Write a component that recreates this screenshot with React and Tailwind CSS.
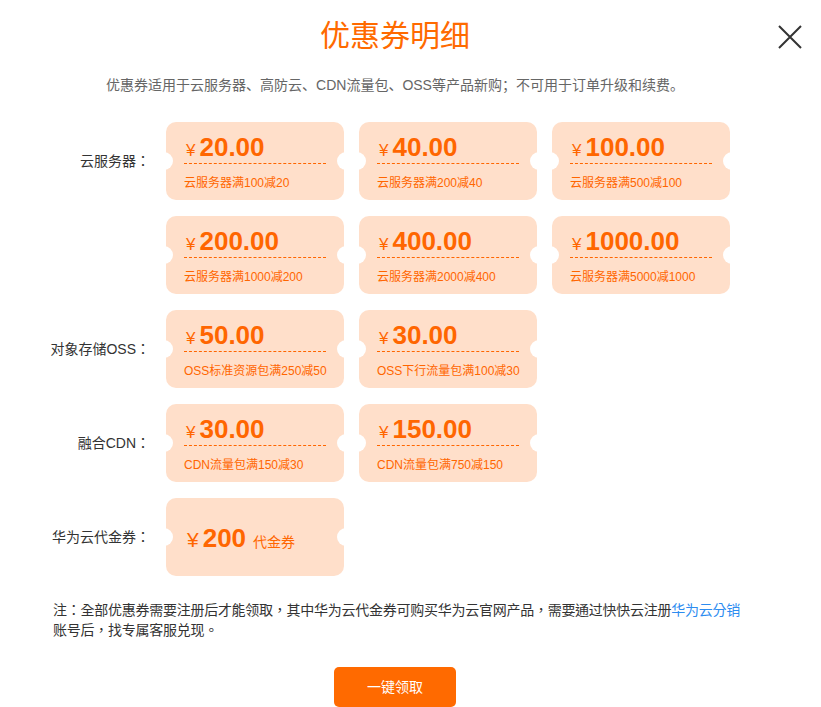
import React from 'react';

const groups = [
  {
    label: '云服务器',
    items: [
      { amount: '20.00', desc: '云服务器满100减20' },
      { amount: '40.00', desc: '云服务器满200减40' },
      { amount: '100.00', desc: '云服务器满500减100' },
      { amount: '200.00', desc: '云服务器满1000减200' },
      { amount: '400.00', desc: '云服务器满2000减400' },
      { amount: '1000.00', desc: '云服务器满5000减1000' },
    ],
  },
  {
    label: '对象存储OSS',
    items: [
      { amount: '50.00', desc: 'OSS标准资源包满250减50' },
      { amount: '30.00', desc: 'OSS下行流量包满100减30' },
    ],
  },
  {
    label: '融合CDN',
    items: [
      { amount: '30.00', desc: 'CDN流量包满150减30' },
      { amount: '150.00', desc: 'CDN流量包满750减150' },
    ],
  },
];

const tcFont = { fontFamily: '"Liberation Sans", "Noto Sans CJK TC", sans-serif' };

function Notches() {
  return (
    <>
      <span className="absolute left-[-11px] top-[30px] w-[18px] h-[18px] rounded-full bg-white" />
      <span className="absolute right-[-11px] top-[30px] w-[18px] h-[18px] rounded-full bg-white" />
    </>
  );
}

function Label({ children }) {
  return (
    <div className="w-[150px] h-[78px] flex items-center justify-end text-[14px] text-[#333] whitespace-nowrap">
      {children}
      <span style={tcFont}>：</span>
    </div>
  );
}

function Ticket({ amount, desc }) {
  return (
    <div className="relative w-[178px] h-[78px] rounded-[10px] bg-[#ffdfca] px-[18px] pt-[12px] text-[#ff6600]">
      <Notches />
      <div className="flex items-baseline h-[30px] leading-[27px] border-b border-dashed border-[#ff6600]">
        <span className="ml-[2px] mr-[4px] text-[17px]">¥</span>
        <span className="text-[26px] font-bold">{amount}</span>
      </div>
      <div className="mt-[11px] text-[12px] leading-[16px] whitespace-nowrap">{desc}</div>
    </div>
  );
}

function CashTicket() {
  return (
    <div className="relative w-[178px] h-[78px] rounded-[10px] bg-[#ffdfca] px-[20px] flex items-center text-[#ff6600]">
      <Notches />
      <div className="flex items-baseline pt-[2px]">
        <span className="ml-[1px] mr-[4px] text-[21px]">¥</span>
        <span className="text-[26px] font-bold">200</span>
        <span className="ml-[7px] text-[14px]">代金券</span>
      </div>
    </div>
  );
}

export default function App() {
  return (
    <div
      className="relative w-[821px] h-[707px] bg-white overflow-hidden"
      style={{ fontFamily: '"Liberation Sans", "Noto Sans CJK SC", sans-serif' }}
    >
      {/* close */}
      <button className="absolute left-[777px] top-[24px] w-[26px] h-[26px]">
        <svg viewBox="0 0 26 26" className="w-[26px] h-[26px]">
          <path d="M2 2 L24 24 M24 2 L2 24" stroke="#333" strokeWidth="2" fill="none" />
        </svg>
      </button>

      <div className="w-[790px] flex flex-col">
        <h1 className="pt-[16px] text-center text-[30px] leading-[40px] text-[#ff6a00]">优惠券明细</h1>
        <p className="mt-[19px] text-center text-[14px] leading-[20px] text-[#666]">
          优惠券适用于云服务器、高防云、CDN流量包、OSS等产品新购；不可用于订单升级和续费。
        </p>

        <div className="mt-[27px] flex flex-col gap-[16px]">
          {groups.map((g) => (
            <div key={g.label} className="flex gap-[16px]">
              <Label>{g.label}</Label>
              <div className="grid grid-cols-[repeat(3,178px)] gap-x-[15px] gap-y-[16px]">
                {g.items.map((it, i) => (
                  <Ticket key={i} amount={it.amount} desc={it.desc} />
                ))}
              </div>
            </div>
          ))}
          <div className="flex gap-[16px]">
            <Label>华为云代金券</Label>
            <CashTicket />
          </div>
        </div>

        <p
          className="mt-[24px] ml-[53px] w-[700px] text-[14px] leading-[20px] tracking-[-0.26px] text-[#333]"
          style={tcFont}
        >
          注：全部优惠券需要注册后才能领取，其中华为云代金券可购买华为云官网产品，需要通过快快云注册
          <span className="text-[#2d8cf0]">华为云分销</span>
          账号后，找专属客服兑现。
        </p>

        <button className="mt-[27px] mx-auto w-[122px] h-[40px] rounded-[5px] bg-[#ff6a00] text-white text-[14px]">
          一键领取
        </button>
      </div>
    </div>
  );
}
